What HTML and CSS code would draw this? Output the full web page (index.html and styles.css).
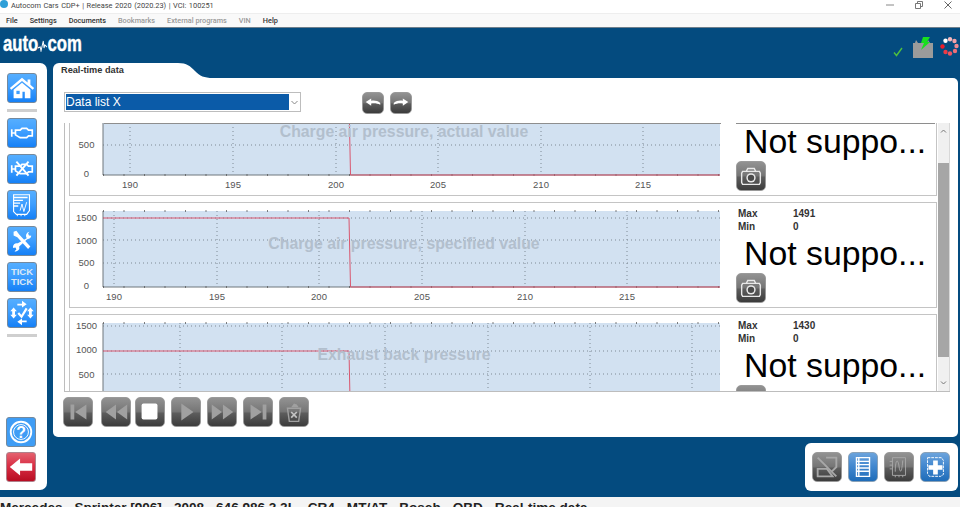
FILE: index.html
```html
<!DOCTYPE html>
<html lang="en">
<head>
    <meta charset="UTF-8">
    <meta name="viewport" content="width=device-width, initial-scale=1.0">
    <title>Autocom Cars CDP+</title>
    <link rel="stylesheet" href="styles.css">
</head>
<body>
    <!-- shared icons -->
    <svg class="icon-defs" aria-hidden="true">
        <symbol id="i-engine" viewBox="0 0 30 30">
            <path d="M4 11v8M4 15h4M8 12h5l2-2h5l2 2h4v6h-4l-2 2h-7l-5-3z" fill="none" stroke="currentColor" stroke-width="1.800"/>
        </symbol>
        <symbol id="i-camera" viewBox="0 0 30 30">
            <path d="M10 10l1.500-3h7l1.500 3" fill="none" stroke="#e8e8e8" stroke-width="1.500"/>
            <path d="M6 10h18l1 2v10l-1 2H6l-1-2V12z" fill="none" stroke="#e8e8e8" stroke-width="1.500"/>
            <circle cx="15" cy="17" r="5" fill="#e8e8e8"/>
            <circle cx="15" cy="17" r="3.400" fill="#4a4a4a"/>
        </symbol>
    </svg>

    <div class="titlebar">
        <span class="app-dot"></span>
        <span class="title-text">Autocom Cars CDP+ | Release 2020 (2020.23) | VCI: 100251</span>
        <div class="win-controls">
            <svg width="8" height="8" viewBox="0 0 8 8"><path d="M0 4h8" stroke="#888"/></svg>
            <svg width="8" height="8" viewBox="0 0 8 8"><path d="M.5 2.500h5v5h-5zM2.500 2.500v-2h5v5h-2" fill="none" stroke="#777"/></svg>
            <svg width="8" height="8" viewBox="0 0 8 8"><path d="M.5.500l7 7M7.500.500l-7 7" stroke="#666"/></svg>
        </div>
    </div>

    <nav class="menubar">
        <span>File</span>
        <span>Settings</span>
        <span>Documents</span>
        <span class="off">Bookmarks</span>
        <span class="off">External programs</span>
        <span class="off">VIN</span>
        <span>Help</span>
    </nav>

    <div class="app">
        <header class="header">
            <div class="logo">auto<svg width="12" height="13" viewBox="0 0 12 13"><path d="M0 9l3-1 1 4 3-10 1 7 1-3 3 2" fill="none" stroke="#fff" stroke-width="1.200"/></svg>com</div>
            <div class="status-icons">
                <svg class="check" width="10" height="10" viewBox="0 0 10 10"><path d="M1 5.500l2.500 3L9 1" fill="none" stroke="#4fbf3f" stroke-width="1.400"/></svg>
                <svg width="22" height="21" viewBox="0 0 22 21">
                    <path d="M1 21V6h2l1-3 2 3h9l1-3 2 3h3v15z" fill="#9b9b9b"/>
                    <path d="M11 0h7l-3 5h3l-9 8 3-7H9z" fill="#18e01e"/>
                </svg>
                <svg class="ring" width="20" height="20" viewBox="0 0 20 20">
                    <circle cx="5.500" cy="3.800" r="2.200" fill="#fff"/>
                    <circle cx="10" cy="2.300" r="2.200" fill="#f4b8bd"/>
                    <circle cx="14.500" cy="4" r="2.200" fill="#f2a0a8"/>
                    <circle cx="16.500" cy="9" r="2.200" fill="#ef8a92"/>
                    <circle cx="15" cy="14" r="2.200" fill="#ee6f78"/>
                    <circle cx="10" cy="16.500" r="2.200" fill="#ee5560"/>
                    <circle cx="5.500" cy="15" r="2.200" fill="#ee3a45"/>
                    <circle cx="2.500" cy="9.500" r="2.200" fill="#ee1c2a"/>
                </svg>
            </div>
        </header>

        <div class="workspace">
            <aside class="sidebar">
                <div class="side-group">
                    <button class="btn blue">
                        <svg viewBox="0 0 30 30">
                            <path d="M15 4L2 15l1.500 2L15 7.500 26.500 17l1.500-2-4-3.500V6h-3v3z" fill="#fff"/>
                            <path d="M6 17l9-7.500 9 7.500v9h-6v-7h-2.500v7H6z" fill="#fff"/>
                            <rect x="9" y="18" width="3.500" height="3.500" fill="#3f9fff"/>
                        </svg>
                    </button>
                    <hr class="side-sep">
                    <button class="btn blue"><svg><use href="#i-engine"/></svg></button>
                    <button class="btn blue">
                        <svg viewBox="0 0 30 30"><use href="#i-engine"/><path d="M9 7l13 15M22 7L9 22" stroke="#fff" stroke-width="2"/></svg>
                    </button>
                    <button class="btn blue">
                        <svg viewBox="0 0 30 30">
                            <path d="M6 4h17v17l-3 4H9l-3-3z" fill="none" stroke="#fff" stroke-width="1.200"/>
                            <path d="M6 7h15M6 10h10M6 13h7M6 16h5" stroke="#fff" stroke-width="1.500"/>
                            <path d="M13 21l2-7 2 8 3-10" fill="none" stroke="#fff"/>
                            <path d="M10 25v2M14 25v2M18 25v2" stroke="#fff"/>
                        </svg>
                    </button>
                    <button class="btn blue">
                        <svg viewBox="0 0 30 30">
                            <path d="M6 5l3-1 3 4 12 13-2.500 2.500L10 11 6 9z" fill="#fff"/>
                            <path d="M20 12a4.500 4.500 0 0 1 3-7l-1.500 2 1 2 2.500.5a4.500 4.500 0 0 1-4.500 3.500L12 21a4 4 0 0 1-5 5l2-2-1-2-2.500.5a4 4 0 0 1 5-5z" fill="#fff"/>
                        </svg>
                    </button>
                    <button class="btn blue tick">TICK<br>TICK</button>
                    <button class="btn blue">
                        <svg viewBox="0 0 30 30">
                            <path d="M11 15l3.500 4L20 10" fill="none" stroke="#fff" stroke-width="2.400"/>
                            <path d="M10 5h5V2l5 3.500L15 9V7h-5zM20 25h-5v3l-5-3.500 5-3.500v2h5z" fill="#fff"/>
                            <path d="M6 9l3.500 4H7.500v4h2L6 21l-3.500-4h2v-4h-2zM24 9l3.500 4h-2v4h2L24 21l-3.500-4h2v-4h-2z" fill="#fff"/>
                        </svg>
                    </button>
                    <hr class="side-sep">
                </div>
                <div class="side-group low">
                    <button class="btn help">
                        <svg viewBox="0 0 30 30">
                            <circle cx="15" cy="15" r="11" fill="none" stroke="#fff" stroke-width="2"/>
                            <circle cx="15" cy="15" r="8" fill="#3f9df5" stroke="#fff" stroke-width="1"/>
                            <text x="15" y="21" class="help-mark">?</text>
                        </svg>
                    </button>
                    <button class="btn red">
                        <svg viewBox="0 0 30 30"><path d="M3 15l11-9v5h13v8H14v5z" fill="#fff"/></svg>
                    </button>
                </div>
            </aside>

            <main class="main">
                <div class="tab-row">
                    <div class="tab">Real-time data</div>
                    <svg class="tab-slope" width="35" height="15" viewBox="0 0 35 15"><path d="M0 0c9 0 12 3 17 8s9 7 18 7H0z" fill="#fff"/></svg>
                </div>
                <section class="panel">
                    <div class="toolbar">
                        <div class="combo">
                            <div class="combo-value">Data list X</div>
                            <svg width="7" height="5" viewBox="0 0 7 5"><path d="M.5 1l3 3 3-3" fill="none" stroke="#888"/></svg>
                        </div>
                        <div class="nav-arrows">
                            <button class="btn gray small">
                                <svg viewBox="0 0 22 22"><path d="M3 10l6-4v2.500c4-.5 7 0 10 2.500v2c-3-1.500-6-2-10-1.500V14z" fill="#fff"/></svg>
                            </button>
                            <button class="btn gray small">
                                <svg viewBox="0 0 22 22"><path d="M19 10l-6-4v2.500c-4-.5-7 0-10 2.500v2c3-1.500 6-2 10-1.500V14z" fill="#fff"/></svg>
                            </button>
                        </div>
                    </div>

                    <div class="scroller">
                        <div class="rows">
                            <div class="row">
                                <svg class="chart" width="664" height="104" viewBox="0 0 664 104">
                                    <rect class="plot" x="33" y="8" width="617" height="76"/>
                                    <path class="grid" d="M60 8V84M163 8V84M266 8V84M368 8V84M471 8V84M573 8V84M33 54H650M33 26H650"/>
                                    <path class="axis" d="M33 8V84H650"/>
                                    <path class="minor" d="M33 84H650"/>
                                    <path class="trace" d="M33 10H279L280.500 84H650"/>
                                    <text class="chart-title" x="334" y="46">Charge air pressure, actual value</text>
                                    <text class="ylab" x="16.500" y="57">500</text>
                                    <text class="ylab" x="16.500" y="86">0</text>
                                    <text class="xlab" x="60" y="97">190</text>
                                    <text class="xlab" x="163" y="97">195</text>
                                    <text class="xlab" x="266" y="97">200</text>
                                    <text class="xlab" x="368" y="97">205</text>
                                    <text class="xlab" x="471" y="97">210</text>
                                    <text class="xlab" x="573" y="97">215</text>
                                </svg>
                                <div class="side">
                                    <div class="stat-blank"></div>
                                    <div class="big">Not suppo...</div>
                                    <button class="btn gray"><svg><use href="#i-camera"/></svg></button>
                                </div>
                            </div>

                            <div class="row">
                                <svg class="chart" width="664" height="104" viewBox="0 0 664 104">
                                    <rect class="plot" x="33" y="8" width="617" height="76"/>
                                    <path class="grid" d="M44 8V84M147 8V84M249 8V84M352 8V84M455 8V84M557 8V84M33 15H650M33 37H650M33 60H650"/>
                                    <path class="axis" d="M33 8V84H650"/>
                                    <path class="minor" d="M33 84H650M33 8H650"/>
                                    <path class="trace" d="M33 15H279L280.500 84H650"/>
                                    <text class="chart-title" x="334" y="46">Charge air pressure, specified value</text>
                                    <text class="ylab" x="16.500" y="18">1500</text>
                                    <text class="ylab" x="16.500" y="41">1000</text>
                                    <text class="ylab" x="16.500" y="63">500</text>
                                    <text class="ylab" x="16.500" y="86">0</text>
                                    <text class="xlab" x="44" y="97">190</text>
                                    <text class="xlab" x="147" y="97">195</text>
                                    <text class="xlab" x="249" y="97">200</text>
                                    <text class="xlab" x="352" y="97">205</text>
                                    <text class="xlab" x="455" y="97">210</text>
                                    <text class="xlab" x="557" y="97">215</text>
                                </svg>
                                <div class="side">
                                    <div class="stat"><span>Max</span><span>1491</span></div>
                                    <div class="stat"><span>Min</span><span>0</span></div>
                                    <div class="big">Not suppo...</div>
                                    <button class="btn gray"><svg><use href="#i-camera"/></svg></button>
                                </div>
                            </div>

                            <div class="row">
                                <svg class="chart" width="664" height="104" viewBox="0 0 664 104">
                                    <rect class="plot" x="33" y="8" width="617" height="76"/>
                                    <path class="grid" d="M110 8V84M212 8V84M315 8V84M418 8V84M520 8V84M622 8V84M33 11H650M33 36H650M33 59H650"/>
                                    <path class="axis" d="M33 8V84H650"/>
                                    <path class="minor" d="M33 8H650"/>
                                    <path class="trace" d="M33 36H279L280 84"/>
                                    <text class="chart-title" x="334" y="45">Exhaust back pressure</text>
                                    <text class="ylab" x="16.500" y="14">1500</text>
                                    <text class="ylab" x="16.500" y="38">1000</text>
                                    <text class="ylab" x="16.500" y="63">500</text>
                                </svg>
                                <div class="side">
                                    <div class="stat"><span>Max</span><span>1430</span></div>
                                    <div class="stat"><span>Min</span><span>0</span></div>
                                    <div class="big">Not suppo...</div>
                                    <button class="btn gray"><svg><use href="#i-camera"/></svg></button>
                                </div>
                            </div>
                        </div>
                        <div class="scrollbar">
                            <svg width="11" height="11" viewBox="0 0 11 11"><path d="M3 6.500l2.500-2.500 2.500 2.500" fill="none" stroke="#777"/></svg>
                            <div class="thumb"></div>
                            <svg class="down" width="11" height="11" viewBox="0 0 11 11"><path d="M3 4.500l2.500 2.500 2.500-2.500" fill="none" stroke="#777"/></svg>
                        </div>
                    </div>

                    <div class="transport">
                        <button class="btn gray"><svg viewBox="0 0 30 30"><path d="M7 7h4v16H7zM24 7v16L12 15z" fill="#a0a0a0"/></svg></button>
                        <button class="btn gray skip"><svg viewBox="0 0 30 30"><path d="M15 7v16L4 15zM27 7v16L16 15z" fill="#a0a0a0"/></svg></button>
                        <button class="btn gray"><svg viewBox="0 0 30 30"><rect x="6" y="6" width="17" height="17" rx="2" fill="#fff"/></svg></button>
                        <button class="btn gray"><svg viewBox="0 0 30 30"><path d="M10 6l13 9-13 9z" fill="#a0a0a0"/></svg></button>
                        <button class="btn gray"><svg viewBox="0 0 30 30"><path d="M4 7v16l11-8zM16 7v16l11-8z" fill="#a0a0a0"/></svg></button>
                        <button class="btn gray"><svg viewBox="0 0 30 30"><path d="M7 7v16l12-8zM20 7h4v16h-4z" fill="#a0a0a0"/></svg></button>
                        <button class="btn gray"><svg viewBox="0 0 30 30">
                            <path d="M8 11h14l-2 14H10z" fill="none" stroke="#a0a0a0" stroke-width="1.500"/>
                            <path d="M12 10l3-4 3 1 2 3z" fill="#a0a0a0"/>
                            <path d="M12 15l6 6M18 15l-6 6" stroke="#c4c4c4" stroke-width="1.800"/>
                        </svg></button>
                    </div>
                </section>

                <div class="tray">
                    <button class="btn gray">
                        <svg viewBox="0 0 30 30">
                            <path d="M14 5h11v10l-5 5" fill="none" stroke="#a8a8a8" stroke-width="2"/>
                            <path d="M5 5l20 20" stroke="#a8a8a8" stroke-width="2"/>
                            <path d="M5 17h10l6 8H5z" fill="none" stroke="#a8a8a8" stroke-width="2"/>
                        </svg>
                    </button>
                    <button class="btn deep">
                        <svg viewBox="0 0 30 30"><path d="M8 5h14v20H8zM8 9h14M8 12.500h14M8 16h14M8 19.500h14M10.500 5v20" fill="none" stroke="#fff" stroke-width="1.500"/></svg>
                    </button>
                    <button class="btn gray">
                        <svg viewBox="0 0 30 30">
                            <path d="M8 5h14v19H8z" fill="none" stroke="#a8a8a8"/>
                            <path d="M11 20c0-14 3-14 4-6s3 8 4-6" fill="none" stroke="#a8a8a8"/>
                            <path d="M11 24v2M15 24v2M19 24v2M5 9h3M5 13h3M5 17h3" stroke="#a8a8a8"/>
                        </svg>
                    </button>
                    <button class="btn deep">
                        <svg viewBox="0 0 30 30">
                            <path d="M7 5h15l2 3v15l-3 2H9l-2-3z" fill="none" stroke="#fff" stroke-dasharray="3 1"/>
                            <path d="M13 8h5v5h5v5h-5v5h-5v-5H8v-5h5z" fill="#fff"/>
                        </svg>
                    </button>
                </div>
            </main>
        </div>
    </div>

    <div class="statusbar">Mercedes - Sprinter [906] - 2008 - 646.986 2.2L - CR4 - MT/AT - Bosch - OBD - Real-time data</div>
</body>
</html>
```

FILE: styles.css
```css
:root {
    --navy: #044b7f;
    --panel-line: #c4c4c4;
    --axis: #6f767d;
    --label: #555;
}

html, body {
    margin: 0;
    height: 507px;
    overflow: hidden;
}

body {
    display: flex;
    flex-direction: column;
    font-family: "Liberation Sans", Arial, sans-serif;
    background: #fff;
    color: #222;
}

.icon-defs {
    position: absolute;
    width: 0;
    height: 0;
}

/* window chrome */
.titlebar {
    height: 13px;
    display: flex;
    align-items: flex-start;
    background: #fff;
    font-family: Roboto, sans-serif;
    font-size: 7.400px;
    word-spacing: 0.700px;
    line-height: 11px;
    color: #444;
}

.app-dot {
    width: 8px;
    height: 8px;
    margin: 0 3px 0 0;
    border-radius: 50%;
    background: #2f9fd8;
}

.title-text {
    white-space: nowrap;
}

.win-controls {
    margin-left: auto;
    display: flex;
    gap: 21px;
    padding: 1px 8px 0 0;
}

.menubar {
    height: 14px;
    display: flex;
    align-items: center;
    gap: 12px;
    padding-left: 6px;
    box-sizing: border-box;
    background: #f9f9f9;
    border-top: 1px solid #eee;
    font-family: Roboto, sans-serif;
    font-size: 7.300px;
    font-weight: 500;
    color: #333;
}

.menubar .off {
    color: #9a9a9a;
}

.app {
    height: 470px;
    background: var(--navy);
    border-top: 1px solid #6e7f8c;
    box-sizing: border-box;
}

.header {
    height: 35px;
    display: flex;
    justify-content: space-between;
}

.logo {
    margin: 5px 0 0 3px;
    font-size: 22px;
    line-height: 22px;
    font-weight: bold;
    color: #fff;
    -webkit-text-stroke: 0.4px #fff;
    transform: scaleX(0.76);
    transform-origin: left center;
    white-space: nowrap;
}

.logo svg {
    vertical-align: -1px;
}

.status-icons {
    display: flex;
    align-items: flex-start;
    gap: 6px;
    padding: 9px 0 0 0;
}

.status-icons .check {
    margin: 10px 3px 0 0;
}

.workspace {
    display: flex;
    padding-right: 2px;
}

/* left column */
.sidebar {
    width: 47px;
    height: 427px;
    box-sizing: border-box;
    padding: 10px 0 8px 7px;
    display: flex;
    flex-direction: column;
    justify-content: space-between;
    background: #fff;
    border-radius: 0 7px 7px 0;
}

.side-group {
    display: flex;
    flex-direction: column;
    gap: 6px;
}

.side-group.low {
    gap: 5px;
    margin-left: -1px;
}

.side-sep {
    width: 30px;
    height: 3px;
    margin: 0;
    border: none;
    background: #cfcfcf;
}

/* icon buttons */
.btn {
    width: 30px;
    height: 30px;
    padding: 0;
    box-sizing: border-box;
    display: block;
    border: 1px solid #8a8f94;
    border-radius: 3px;
    color: #fff;
    flex: none;
}

.btn svg {
    display: block;
    width: 28px;
    height: 28px;
}

.btn.blue {
    background: linear-gradient(#55aeff, #3f9fff 45%, #1580f6);
    border-color: #74899d;
}

.btn.help {
    background: #3f9df5;
    border-color: #74899d;
}

.btn.red {
    background: linear-gradient(#e4626f, #d92f45 45%, #b80d22);
    border-color: #b0808a;
}

.btn.gray {
    background: linear-gradient(#929292, #767676 48%, #5c5c5c 55%, #3c3c3c);
    border-color: #9a9a9a;
    border-radius: 5px;
}

.btn.deep {
    background: linear-gradient(#6ba3dc, #4187cf 48%, #1f6cb8);
    border-color: #8aa2b8;
    border-radius: 5px;
}

.btn.small {
    width: 22px;
    height: 22px;
}

.btn.small svg {
    width: 20px;
    height: 20px;
}

.btn.tick {
    font-family: "Liberation Sans", sans-serif;
    font-size: 9.500px;
    line-height: 10px;
    font-weight: bold;
    text-align: center;
    color: #dbe9f7;
}

.help-mark {
    font-family: "Liberation Sans", sans-serif;
    font-size: 17px;
    font-weight: bold;
    text-anchor: middle;
    fill: #fff;
}

/* main column */
.main {
    flex: 1;
    margin-left: 6px;
    display: flex;
    flex-direction: column;
}

.tab-row {
    height: 15px;
    display: flex;
}

.tab {
    width: 125px;
    box-sizing: border-box;
    padding: 2px 0 0 8px;
    background: #fff;
    border-radius: 6px 0 0 0;
    font-size: 9.200px;
    line-height: 11px;
    font-weight: bold;
    color: #333;
}

.panel {
    height: 359px;
    box-sizing: border-box;
    padding: 14px 8px 0 11px;
    background: #fff;
    border-radius: 0 5px 5px 5px;
}

.toolbar {
    display: flex;
    align-items: flex-start;
}

.combo {
    width: 237px;
    height: 20px;
    box-sizing: border-box;
    padding: 1px 0 1px 1px;
    display: flex;
    align-items: center;
    justify-content: space-between;
    border: 1px solid #bdbdbd;
}

.combo svg {
    margin-right: 2px;
}

.combo-value {
    width: 223px;
    height: 16px;
    background: #0b5ba8;
    font-size: 12px;
    line-height: 16px;
    color: #fff;
}

.nav-arrows {
    margin-left: 61px;
    display: flex;
    gap: 6px;
}

/* chart list */
.scroller {
    position: relative;
    height: 269px;
    margin-top: 9px;
    box-sizing: border-box;
    display: flex;
    overflow: hidden;
    border-left: 1px solid #bdbdbd;
    border-bottom: 1px solid #bdbdbd;
}

.scroller::before,
.scroller::after {
    content: "";
    position: absolute;
    top: 0;
    height: 1px;
    background: #8e8e8e;
}

.scroller::before {
    left: 39px;
    width: 617px;
}

.scroller::after {
    left: 671px;
    width: 199px;
}

.rows {
    flex: 1;
    margin-top: -33px;
    padding: 0 1px 0 4px;
    display: flex;
    flex-direction: column;
    gap: 6px;
}

.row {
    height: 106px;
    box-sizing: border-box;
    display: flex;
    flex: none;
    border: 1px solid var(--panel-line);
}

.chart {
    display: block;
    flex: none;
}

.plot {
    fill: #d2e1f1;
}

.grid {
    fill: none;
    stroke: #7f8a95;
    stroke-dasharray: 1 3;
}

.axis {
    fill: none;
    stroke: var(--axis);
}

.minor {
    fill: none;
    stroke: #555;
    stroke-width: 1.500;
    stroke-dasharray: 1 19.500;
}

.trace {
    fill: none;
    stroke: #d9566e;
}

.chart-title {
    font-size: 15.800px;
    font-weight: bold;
    text-anchor: middle;
    fill: #b2bfcd;
}

.ylab,
.xlab {
    font-size: 9.500px;
    fill: var(--label);
    text-anchor: middle;
}

.side {
    flex: 1;
    padding: 4px 0 0 2px;
}

.stat {
    display: flex;
    padding-left: 2px;
    font-size: 10px;
    line-height: 13px;
    font-weight: bold;
    color: #333;
}

.stat span:first-child {
    width: 55px;
}

.stat-blank {
    height: 26px;
}

.big {
    margin: 0 0 4px 8px;
    height: 36px;
    font-size: 33.800px;
    line-height: 40px;
    color: #000;
    white-space: nowrap;
}

.scrollbar {
    width: 11px;
    display: flex;
    flex-direction: column;
    background: #f0f0f0;
    border-right: 1px solid #d8d8d8;
}

.scrollbar svg {
    display: block;
    margin: 3px 0;
}

.scrollbar .down {
    margin-top: auto;
}

.thumb {
    height: 194px;
    margin-top: 23px;
    background: #a6a6a6;
}

/* playback buttons */
.transport {
    margin: 5px 0 0 -1px;
    display: flex;
    gap: 6px;
}

.transport .skip {
    margin: 0 -2px 0 2px;
}

/* lower right tray */
.tray {
    align-self: flex-end;
    width: 153px;
    height: 48px;
    margin-top: 6px;
    box-sizing: border-box;
    padding: 9px 0 0 7px;
    display: flex;
    gap: 6px;
    background: #fff;
    border-radius: 6px;
}

.statusbar {
    height: 10px;
    overflow: hidden;
    background: #f4f4f4;
    font-size: 13.550px;
    line-height: 21px;
    font-weight: bold;
    color: #222;
    white-space: nowrap;
}
```
